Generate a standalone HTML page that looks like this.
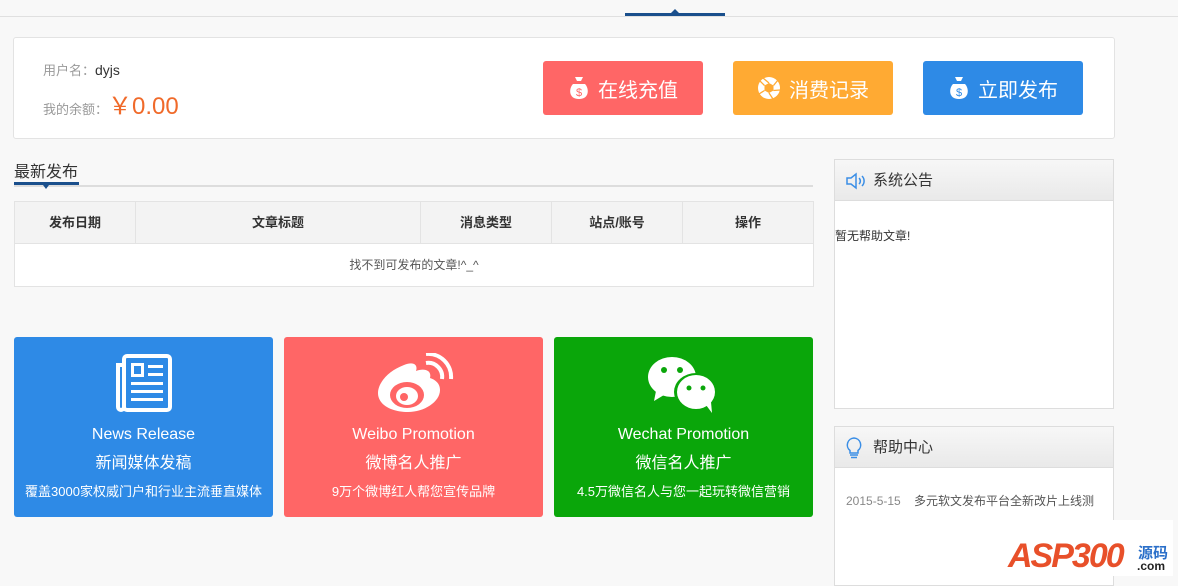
<!DOCTYPE html>
<html><head><meta charset="utf-8"><style>
*{margin:0;padding:0;box-sizing:border-box}
body{width:1178px;height:576px;overflow:hidden;background:#f8f8f8;font-family:"Liberation Sans","Noto Sans CJK SC",sans-serif;position:relative;color:#333}
.a{position:absolute}
.btn{position:absolute;top:61px;width:160px;height:54px;border-radius:3px;color:#fff;font-size:20px;display:flex;align-items:center;justify-content:center;gap:8px}
.th{position:absolute;top:0;height:42px;line-height:42px;text-align:center;font-size:13px;font-weight:bold;color:#333;border-right:1px solid #e3e3e3}
.card{position:absolute;top:337px;width:259px;height:180px;border-radius:3px;color:#fff;text-align:center}
.card .e{position:absolute;top:89px;width:100%;font-size:16px}
.card .c{position:absolute;top:112px;width:100%;font-size:16px}
.card .d{position:absolute;top:144px;width:100%;font-size:13px}
.card svg{position:absolute;left:50%;top:16px;transform:translateX(-50%)}
.panel{position:absolute;left:834px;width:280px;background:#fff;border:1px solid #ddd}
.ph{height:41px;background:linear-gradient(#f7f7f7,#e9e9e9);border-bottom:1px solid #ddd;font-size:15px;line-height:41px;padding-left:38px;color:#333;position:relative}
</style></head><body>
<div class="a" style="left:0;top:16px;width:1178px;height:1px;background:#e0e0e0"></div>
<div class="a" style="left:625px;top:13px;width:100px;height:3px;background:#1a4f8c"></div>
<div class="a" style="left:671px;top:9px;width:0;height:0;border-left:4px solid transparent;border-right:4px solid transparent;border-bottom:4px solid #1a4f8c"></div>

<div class="a" style="left:13px;top:37px;width:1102px;height:102px;background:#fff;border:1px solid #e3e3e3;border-radius:3px"></div>
<div class="a" style="left:43px;top:60px;font-size:13px;color:#999">用户名：<span style="color:#333;font-size:14px">dyjs</span></div>
<div class="a" style="left:43px;top:93px;font-size:13px;color:#999;line-height:28px">我的余额：<span style="color:#f06a2a;font-size:24px">￥0.00</span></div>

<div class="btn" style="left:543px;background:#ff6666"><svg width="22" height="26" viewBox="0 0 22 26"><path d="M7 2h8l-2 4h-4z M5 9c-4 4-5 15 6 15s10-11 6-15z" fill="#fff"/><text x="11" y="21" font-size="11" text-anchor="middle" fill="#ff6666" font-family="Liberation Sans">$</text></svg>在线充值</div>
<div class="btn" style="left:733px;background:#ffaa33"><svg width="24" height="24" viewBox="0 0 24 24"><circle cx="12" cy="12" r="11" fill="#fff"/><polygon points="12,7 16.5,9.5 16.5,14.5 12,17 7.5,14.5 7.5,9.5" fill="#ffaa33"/><path d="M12 7L6 2M16.5 9.5L21 4M16.5 14.5L23 14M12 17L16 23M7.5 14.5L2 18M7.5 9.5L3 5" stroke="#ffaa33" stroke-width="1.3"/></svg>消费记录</div>
<div class="btn" style="left:923px;background:#2e8ae6"><svg width="22" height="26" viewBox="0 0 22 26"><path d="M7 2h8l-2 4h-4z M5 9c-4 4-5 15 6 15s10-11 6-15z" fill="#fff"/><text x="11" y="21" font-size="11" text-anchor="middle" fill="#2e8ae6" font-family="Liberation Sans">$</text></svg>立即发布</div>

<div class="a" style="left:14px;top:163px;font-size:16px;color:#333;line-height:20px">最新发布</div>
<div class="a" style="left:14px;top:185px;width:799px;height:2px;background:#ddd"></div>
<div class="a" style="left:14px;top:182px;width:65px;height:3px;background:#1a4f8c"></div>
<div class="a" style="left:43px;top:185px;border-left:3px solid transparent;border-right:3px solid transparent;border-top:4px solid #1a4f8c"></div>

<div class="a" style="left:14px;top:201px;width:800px;height:86px;background:#fff;border:1px solid #e3e3e3">
<div class="a" style="left:0;top:0;width:798px;height:42px;background:#f3f3f3;border-bottom:1px solid #e3e3e3"></div>
<div class="th" style="left:0;width:121px">发布日期</div>
<div class="th" style="left:121px;width:285px">文章标题</div>
<div class="th" style="left:406px;width:131px">消息类型</div>
<div class="th" style="left:537px;width:131px">站点/账号</div>
<div class="th" style="left:668px;width:130px;border:none">操作</div>
<div class="a" style="left:0;top:42px;width:798px;line-height:42px;text-align:center;font-size:12px;color:#555">找不到可发布的文章!^_^</div>
</div>

<div class="card" style="left:14px;background:#2e8ae6">
<svg width="60" height="60" viewBox="0 0 60 60"><g fill="none" stroke="#fff" stroke-width="4"><rect x="10" y="3" width="46" height="54" rx="3"/><path d="M10 12H4v42a3 3 0 0 0 6 0"/></g><g fill="#fff"><rect x="17" y="10" width="13" height="14"/><rect x="34" y="12" width="15" height="3"/><rect x="34" y="20" width="15" height="3"/><rect x="17" y="29" width="32" height="3"/><rect x="17" y="37" width="32" height="3"/><rect x="17" y="45" width="32" height="3"/></g><rect x="20" y="13" width="7" height="8" fill="#2e8ae6"/></svg>
<div class="e">News Release</div><div class="c">新闻媒体发稿</div><div class="d">覆盖3000家权威门户和行业主流垂直媒体</div></div>
<div class="card" style="left:284px;background:#ff6666">
<svg width="80" height="62" viewBox="0 0 80 62"><path d="M30 12c10-4 14 0 12 6 8-3 16-1 14 7 6 2 10 6 10 12 0 12-16 22-32 22S4 52 4 40c0-10 10-22 26-28z" fill="#fff"/><ellipse cx="33" cy="42" rx="17" ry="13" fill="#ff6666"/><ellipse cx="33" cy="43" rx="11" ry="9" fill="#fff"/><circle cx="30" cy="44" r="4" fill="#ff6666"/><path d="M52 10a14 14 0 0 1 16 16" stroke="#fff" stroke-width="4" fill="none"/><path d="M52 1a23 23 0 0 1 25 25" stroke="#fff" stroke-width="4" fill="none"/></svg>
<div class="e">Weibo Promotion</div><div class="c">微博名人推广</div><div class="d">9万个微博红人帮您宣传品牌</div></div>
<div class="card" style="left:554px;background:#0aa60a">
<svg width="76" height="62" viewBox="0 0 76 62"><ellipse cx="26" cy="24" rx="24" ry="20" fill="#fff"/><path d="M10 38l-2 10 10-6z" fill="#fff"/><circle cx="18" cy="17" r="3" fill="#0aa60a"/><circle cx="34" cy="17" r="3" fill="#0aa60a"/><ellipse cx="50" cy="39" rx="22" ry="19" fill="#0aa60a"/><ellipse cx="50" cy="39" rx="19" ry="17" fill="#fff"/><path d="M60 52l6 8-1-11z" fill="#fff"/><circle cx="43" cy="35" r="2.5" fill="#0aa60a"/><circle cx="57" cy="35" r="2.5" fill="#0aa60a"/></svg>
<div class="e">Wechat Promotion</div><div class="c">微信名人推广</div><div class="d">4.5万微信名人与您一起玩转微信营销</div></div>

<div class="panel" style="top:159px;height:250px">
<div class="ph"><svg class="a" style="left:10px;top:12px" width="22" height="18" viewBox="0 0 22 18"><path d="M2 6h4l5-4v14l-5-4H2z" fill="none" stroke="#3a8ee6" stroke-width="1.5"/><path d="M14 6a4 4 0 0 1 0 6M17 4a7 7 0 0 1 0 10" fill="none" stroke="#3a8ee6" stroke-width="1.5"/></svg>系统公告</div>
<div style="font-size:12px;color:#333;padding-top:26px">暂无帮助文章!</div>
</div>
<div class="panel" style="top:426px;height:160px">
<div class="ph"><svg class="a" style="left:10px;top:10px" width="18" height="22" viewBox="0 0 18 22"><path d="M9 1a7 7 0 0 0-4 12.5V16h8v-2.5A7 7 0 0 0 9 1z" fill="none" stroke="#3a8ee6" stroke-width="1.5"/><path d="M5 18h8M6 20.5h6" stroke="#3a8ee6" stroke-width="1.5"/></svg>帮助中心</div>
<div style="font-size:12px;color:#555;padding:24px 0 0 11px;white-space:nowrap"><span style="color:#888">2015-5-15</span>&nbsp;&nbsp;&nbsp;&nbsp;多元软文发布平台全新改片上线测</div>
</div>

<div class="a" style="left:1003px;top:520px;width:170px;height:56px;background:#fff"></div>
<div class="a" style="left:1008px;top:536px;font-size:34px;font-weight:bold;font-style:italic;color:#e8502a;letter-spacing:-2px;line-height:40px">ASP300</div>
<div class="a" style="left:1138px;top:542px;font-size:15px;font-weight:bold;color:#2a6fc9">源码</div>
<div class="a" style="left:1137px;top:559px;font-size:12px;font-weight:bold;color:#222">.com</div>
</body></html>
